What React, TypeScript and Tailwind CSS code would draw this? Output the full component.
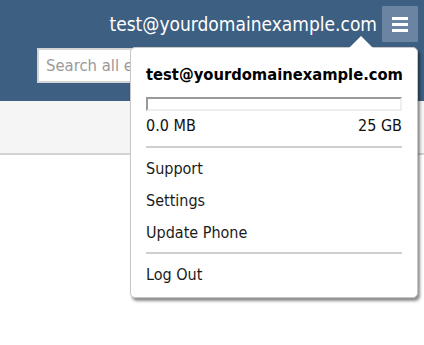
import { useState } from 'react';

const menuItems = ['Support', 'Settings', 'Update Phone'];

const App = () => {
  const [query, setQuery] = useState('');

  return (
    <div className="relative w-[424px] h-[345px] overflow-hidden bg-white font-['Tahoma','DejaVu_Sans_Condensed','DejaVu_Sans',sans-serif]">
      {/* Header */}
      <header className="h-[101px] bg-[#3d5f82]">
        <div className="flex items-center justify-end gap-[5px] pt-[6px] pr-[6px]">
          <span className="text-[19px] leading-[36px] text-white">test@yourdomainexample.com</span>
          <button className="flex h-[36px] w-[36px] flex-col items-center justify-center gap-[3px] bg-[#6a84a1]">
            <span className="block h-[3px] w-[16px] bg-white" />
            <span className="block h-[3px] w-[16px] bg-white" />
            <span className="block h-[3px] w-[16px] bg-white" />
          </button>
        </div>
        <div className="pl-[37px] pt-[6px]">
          <input
            value={query}
            onChange={(e) => setQuery(e.target.value)}
            placeholder="Search all emails"
            className="h-[35px] w-[300px] border-2 border-[#d4d4d4] bg-white px-[7px] text-[16.5px] text-[#333] outline-none placeholder:text-[#9a9a9a]"
          />
        </div>
      </header>

      {/* Toolbar strip */}
      <div className="h-[54px] border-b-2 border-[#d3d3d3] bg-[#f5f5f5]" />

      {/* Account dropdown */}
      <div className="absolute left-[130px] top-[47px] w-[288px] rounded-[5px] border border-[#c8c8c8] bg-white px-[15px] pt-[15px] pb-[6px] shadow-[2px_3px_3px_rgba(0,0,0,0.45)]">
        <div className="absolute -top-[12px] left-[218px] h-0 w-0 border-x-[12px] border-b-[12px] border-x-transparent border-b-white" />
        <div className="text-[16.4px] font-bold leading-[24px] text-black">test@yourdomainexample.com</div>
        <div className="mt-[10px] h-[14px] border-2 border-t-[#999] border-l-[#999] border-r-[#eee] border-b-[#eee] bg-white" />
        <div className="flex justify-between pt-[3px] text-[16px] leading-[24px] text-[#111]">
          <span>0.0 MB</span>
          <span>25 GB</span>
        </div>
        <div className="mt-[8px] h-[2px] bg-[#cfcfcf]" />
        <ul className="pt-[5px]">
          {menuItems.map((item) => (
            <li key={item} className="text-[16px] leading-[32px] text-[#1b1b1b]">
              {item}
            </li>
          ))}
        </ul>
        <div className="mt-[3px] h-[2px] bg-[#cfcfcf]" />
        <div className="pt-[5px] text-[16px] leading-[32px] text-[#1b1b1b]">Log Out</div>
      </div>
    </div>
  );
};

export default App;
